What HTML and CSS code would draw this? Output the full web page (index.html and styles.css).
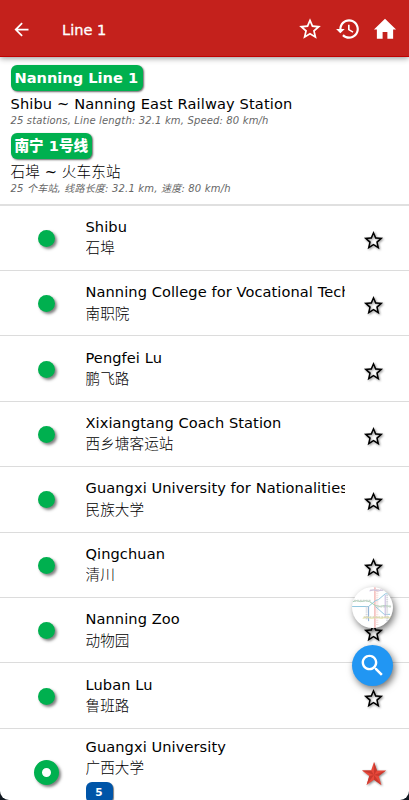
FILE: index.html
```
<!DOCTYPE html>
<html lang="en">
<head>
    <meta charset="UTF-8">
    <meta name="viewport" content="width=device-width, initial-scale=1.0">
    <link rel="stylesheet" href="styles.css">
    <title>Line 1</title>
</head>
<body>
    <svg class="symbols">
        <symbol id="star" viewBox="0 0 24 24">
            <path d="M22 9.24l-7.19-.62L12 2 9.19 8.63 2 9.24l5.46 4.73L5.82 21 12 17.27 18.18 21l-1.63-7.03L22 9.24zM12 15.4l-3.76 2.27 1-4.28-3.32-2.88 4.38-.38L12 6.1l1.71 4.04 4.38.38-3.32 2.88 1 4.28L12 15.4z"/>
        </symbol>
    </svg>
    <div class="app">
        <header class="header">
            <svg class="back" viewBox="0 0 24 24"><path d="M20 11H7.83l5.59-5.59L12 4l-8 8 8 8 1.41-1.41L7.83 13H20v-2z"/></svg>
            <h1 class="title">Line 1</h1>
            <div class="actions">
                <svg class="action" viewBox="0 0 24 24"><use href="#star"/></svg>
                <svg class="action" viewBox="0 0 24 24"><path d="M13 3c-4.97 0-9 4.03-9 9H1l3.89 3.89.07.14L9 12H6c0-3.87 3.13-7 7-7s7 3.13 7 7-3.13 7-7 7c-1.93 0-3.68-.79-4.94-2.06l-1.42 1.42C8.27 19.99 10.51 21 13 21c4.97 0 9-4.03 9-9s-4.03-9-9-9zm-1 5v5l4.28 2.54.72-1.21-3.5-2.08V8H12z"/></svg>
                <svg class="action" viewBox="0 0 24 24"><path d="M9.8 21v-6.2h4.4V21h5.3v-8.5H22.2L12 2.6 1.8 12.5h2.7V21z"/></svg>
            </div>
        </header>

        <section class="summary">
            <div class="line-badge">Nanning Line 1</div>
            <div class="route">Shibu ~ Nanning East Railway Station</div>
            <div class="info">25 stations, Line length: 32.1 km, Speed: 80 km/h</div>
            <div class="line-badge zh">南宁 1号线</div>
            <div class="route zh">石埠 <span class="tilde">~</span> 火车东站</div>
            <div class="info zh">25 个车站, 线路长度: 32.1 km, 速度: 80 km/h</div>
        </section>

        <main class="stations">
            <div class="station">
                <div class="marker"><span class="dot"></span></div>
                <div class="names"><div class="name">Shibu</div><div class="name-zh">石埠</div></div>
                <svg class="favorite" viewBox="0 0 24 24"><use href="#star"/></svg>
            </div>
            <div class="station">
                <div class="marker"><span class="dot"></span></div>
                <div class="names"><div class="name">Nanning College for Vocational Technology</div><div class="name-zh">南职院</div></div>
                <svg class="favorite" viewBox="0 0 24 24"><use href="#star"/></svg>
            </div>
            <div class="station">
                <div class="marker"><span class="dot"></span></div>
                <div class="names"><div class="name">Pengfei Lu</div><div class="name-zh">鹏飞路</div></div>
                <svg class="favorite" viewBox="0 0 24 24"><use href="#star"/></svg>
            </div>
            <div class="station">
                <div class="marker"><span class="dot"></span></div>
                <div class="names"><div class="name">Xixiangtang Coach Station</div><div class="name-zh">西乡塘客运站</div></div>
                <svg class="favorite" viewBox="0 0 24 24"><use href="#star"/></svg>
            </div>
            <div class="station">
                <div class="marker"><span class="dot"></span></div>
                <div class="names"><div class="name">Guangxi University for Nationalities</div><div class="name-zh">民族大学</div></div>
                <svg class="favorite" viewBox="0 0 24 24"><use href="#star"/></svg>
            </div>
            <div class="station">
                <div class="marker"><span class="dot"></span></div>
                <div class="names"><div class="name">Qingchuan</div><div class="name-zh">清川</div></div>
                <svg class="favorite" viewBox="0 0 24 24"><use href="#star"/></svg>
            </div>
            <div class="station">
                <div class="marker"><span class="dot"></span></div>
                <div class="names"><div class="name">Nanning Zoo</div><div class="name-zh">动物园</div></div>
                <svg class="favorite" viewBox="0 0 24 24"><use href="#star"/></svg>
            </div>
            <div class="station">
                <div class="marker"><span class="dot"></span></div>
                <div class="names"><div class="name">Luban Lu</div><div class="name-zh">鲁班路</div></div>
                <svg class="favorite" viewBox="0 0 24 24"><use href="#star"/></svg>
            </div>
            <div class="station interchange">
                <div class="marker"><span class="dot ring"></span></div>
                <div class="names">
                    <div class="name">Guangxi University</div>
                    <div class="name-zh">广西大学</div>
                    <span class="transfer">5</span>
                </div>
                <svg class="favorite saved" viewBox="0 0 24 24">
                    <path fill="#e8483a" d="M12 0l2.9 8.5 9.1.1-7.3 5.5 2.7 8.9L12 17.8 4.6 23l2.7-8.9L0 8.6l9.1-.1z"/>
                    <path fill="#c8392e" d="M12 0v13l2.9-4.5zM24 8.6L12 13l4.7 1.1zM19.4 23L12 13v4.8zM4.6 23L12 13l-4.7 1.1zM0 8.6L12 13 9.1 8.5z"/>
                </svg>
            </div>
        </main>

        <div class="floating">
            <div class="fab map">
                <svg viewBox="0 0 42 42" fill="none">
                    <path stroke="#f5bab8" stroke-width="1.6" d="M23.5 0v42"/>
                    <path stroke="#f6dedc" stroke-width="3" stroke-dasharray="1 1" d="M25.5 2v38"/>
                    <path stroke="#8fc6df" d="M0 20h17l7-6 3-1 7-6h4M24 20l9 8h6"/>
                    <path stroke="#86aad0" d="M17 20v15"/>
                    <path stroke="#c9ccd4" stroke-width="2" stroke-dasharray="1 1" d="M15 20v14M36 8v27"/>
                    <path stroke="#9dd0ae" d="M1 15l4-1 4 1 5-1 4 1 6 4 5 1 4-1 7 1"/>
                    <path stroke="#ccd5cd" stroke-width="2" stroke-dasharray="2 1" d="M2 14h17M26 20h14"/>
                    <path stroke="#c3b3da" d="M18 4l4-1 5 1 5-1M34 8v24"/>
                    <path stroke="#d5ccda" stroke-width="2" stroke-dasharray="1 1" d="M19 3h14"/>
                    <path stroke="#e4e28f" d="M11 32l4-1 5 1 5-1 5 1 5-1 5 1"/>
                    <path stroke="#dad9bd" stroke-width="2" stroke-dasharray="2 1" d="M12 31h28"/>
                </svg>
            </div>
            <div class="fab search">
                <svg viewBox="0 0 24 24"><path d="M15.5 14h-.79l-.28-.27C15.41 12.59 16 11.11 16 9.5 16 5.91 13.09 3 9.5 3S3 5.91 3 9.5 5.91 16 9.5 16c1.61 0 3.09-.59 4.23-1.57l.27.28v.79l5 4.99L20.49 19l-4.99-5zm-6 0C7.01 14 5 11.99 5 9.5S7.01 5 9.5 5 14 7.01 14 9.5 11.99 14 9.5 14z"/></svg>
            </div>
        </div>
    </div>
</body>
</html>
```

FILE: styles.css
```
* {
    box-sizing: border-box;
}

body {
    margin: 0;
    background-color: #101820;
    font-family: Verdana, "DejaVu Sans", "Noto Sans CJK SC", sans-serif;
    color: #000;
}

.symbols {
    display: none;
}

.app {
    position: relative;
    height: 800px;
    overflow: hidden;
    background-color: #fff;
    border-radius: 0 0 9px 9px;
}

.header {
    display: flex;
    align-items: center;
    height: 57px;
    padding: 0 11px;
    background-color: #c4211c;
    border-bottom: 1px solid #c00000;
    box-shadow: 0 1px 6px rgba(0, 0, 0, 0.45);
    fill: #fff;
}

.back {
    width: 21px;
    height: 21px;
    margin-top: 2px;
}

.title {
    margin: 2px 0 0 30px;
    font-size: 14.6px;
    font-weight: normal;
    color: #fff;
    -webkit-text-stroke: 0.3px #fff;
}

.actions {
    display: flex;
    gap: 11.5px;
    margin: 1px 0 0 auto;
}

.action {
    width: 26px;
    height: 26px;
}

.summary {
    height: 148.5px;
    padding: 8px 10px 0 10.5px;
    border-bottom: 2px solid #e0e0e0;
    white-space: nowrap;
}

.line-badge {
    width: fit-content;
    height: 26px;
    padding: 0 5px 0 4px;
    border-radius: 6px;
    background-color: #00b04f;
    box-shadow: 1px 1px 2px rgba(0, 0, 0, 0.6);
    font-size: 14.6px;
    font-weight: bold;
    line-height: 26px;
    color: #fff;
}

.line-badge.zh {
    margin-top: 5px;
    padding: 0 4px;
    font-weight: 900;
}

.route {
    height: 20px;
    margin-top: 3px;
    font-size: 14.6px;
    line-height: 20px;
    letter-spacing: 0.13px;
}

.info {
    height: 14px;
    font-size: 10px;
    font-style: italic;
    line-height: 14px;
    letter-spacing: 0.15px;
    color: #666;
}

.info.zh {
    letter-spacing: 0.19px;
}

.station {
    display: flex;
    align-items: center;
    height: 65.43px;
    border-bottom: 1px solid #dcdcdc;
}

.marker {
    display: flex;
    flex: none;
    justify-content: center;
    width: 93px;
    margin: 1px -7.5px 0 0;
}

.dot {
    width: 17px;
    height: 17px;
    border-radius: 50%;
    background-color: #00b04f;
    box-shadow: 2px 2px 3px rgba(0, 0, 0, 0.5);
}

.ring {
    width: 25px;
    height: 25px;
    border: 8px solid #00b04f;
    background-color: #fff;
}

.names {
    width: 259px;
    margin-top: -1px;
    overflow: hidden;
    white-space: nowrap;
}

.name,
.name-zh {
    height: 21.5px;
    font-size: 14.6px;
    line-height: 21.5px;
    letter-spacing: 0.08px;
}

.name-zh,
.route.zh {
    font-weight: 300;
}

.tilde {
    font-weight: normal;
}

.favorite {
    flex: none;
    width: 23px;
    height: 23px;
    margin: 5px 0 0 17.5px;
    filter: drop-shadow(1px 1px 1px rgba(0, 0, 0, 0.45));
}

.interchange {
    height: 87px;
    border-bottom: none;
}

.interchange .names {
    margin-top: -6px;
}

.transfer {
    display: block;
    width: 27px;
    height: 21px;
    margin-top: 3px;
    border-radius: 6px;
    background-color: #0055a8;
    box-shadow: 1px 1px 1px rgba(0, 0, 0, 0.5);
    font-size: 10.5px;
    font-weight: bold;
    line-height: 21px;
    text-align: center;
    color: #fff;
}

.saved {
    width: 24px;
    height: 24px;
    margin-top: 4px;
}

.floating {
    position: absolute;
    right: 16px;
    bottom: 114px;
    display: flex;
    flex-direction: column;
    gap: 17px;
}

.fab {
    display: flex;
    align-items: center;
    justify-content: center;
    width: 41px;
    height: 41px;
    overflow: hidden;
    border-radius: 50%;
    background-color: #fff;
    box-shadow: 2px 3px 7px rgba(0, 0, 0, 0.55);
}

.search {
    background-color: #2196f3;
    fill: #fff;
}

.search svg {
    width: 29px;
    height: 29px;
}
```
